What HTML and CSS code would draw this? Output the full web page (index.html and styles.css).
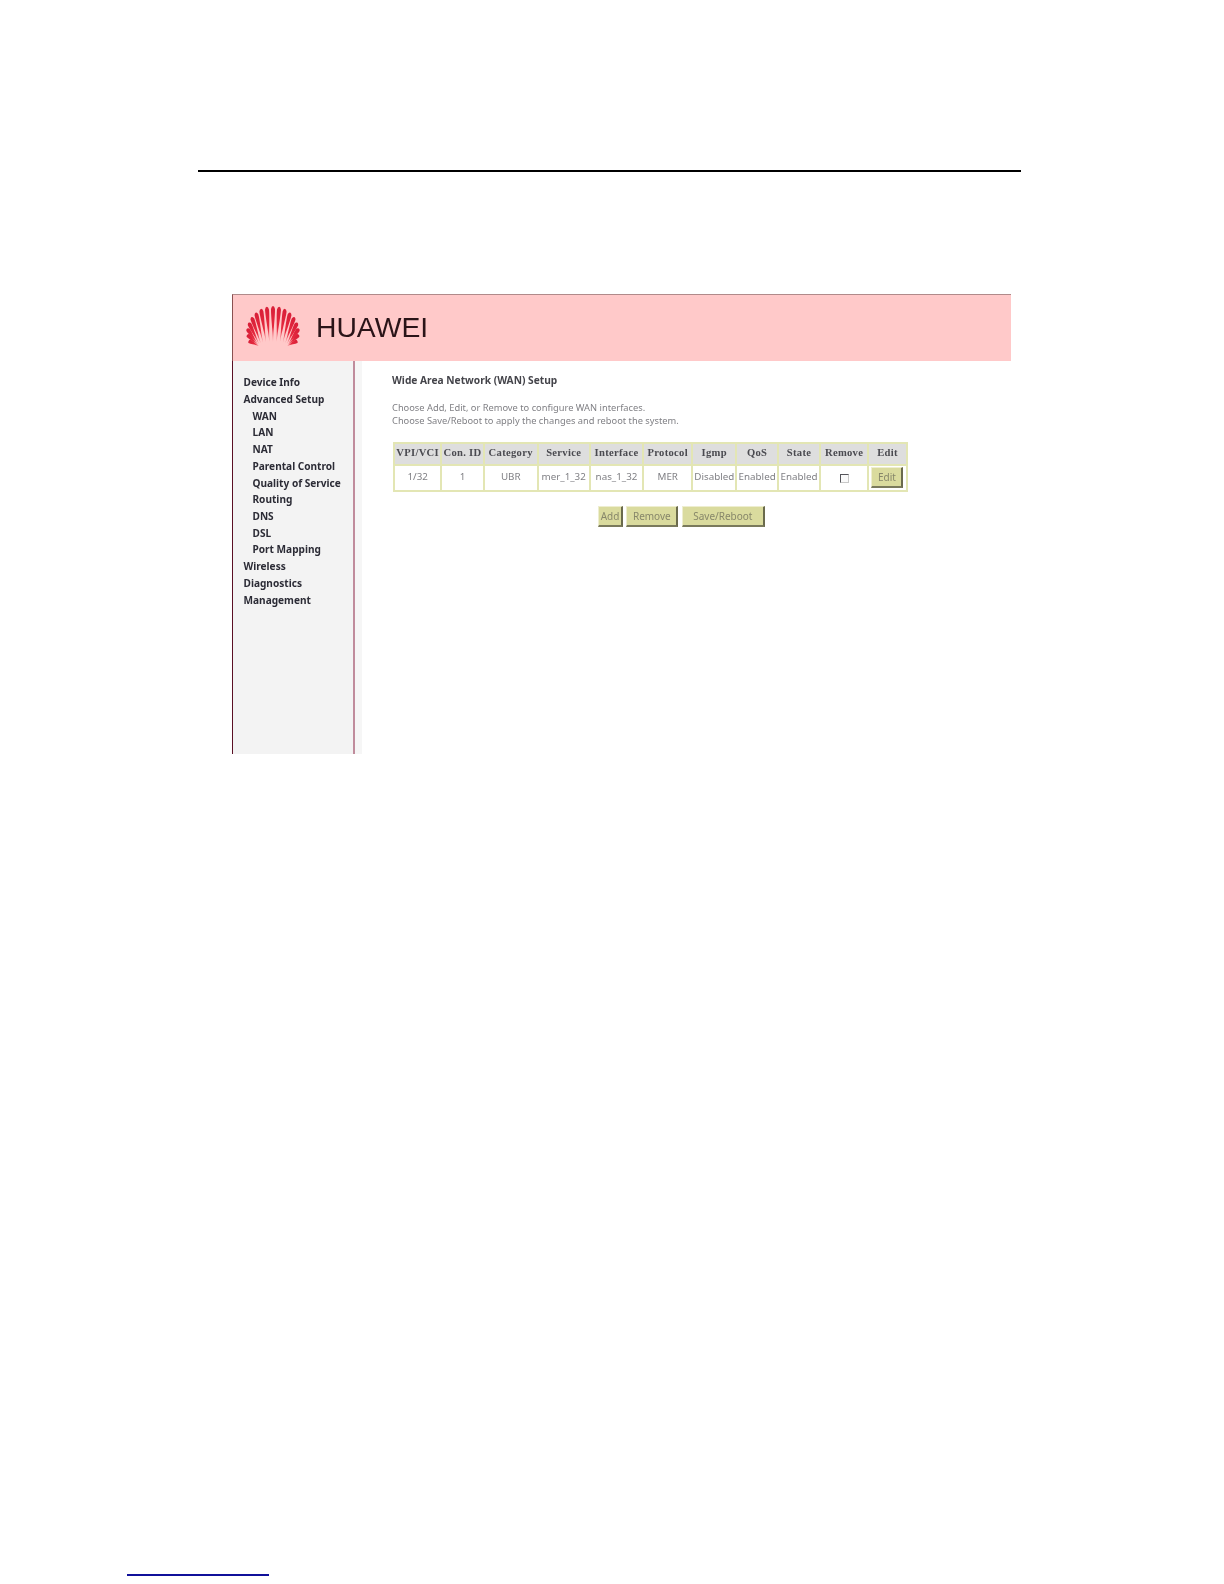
FILE: index.html
```html
<!DOCTYPE html>
<html lang="en">
<head>
<meta charset="utf-8">
<title>WAN Setup</title>
<link rel="stylesheet" href="styles.css">
</head>
<body>
<div class="page">
  <hr class="top-rule">
  <div class="shot">
    <header class="banner">
      <svg class="logo" viewBox="-27 -44 54 44" aria-hidden="true">
        <defs>
          <linearGradient id="g" x1="0" y1="-1" x2="0" y2="0" gradientUnits="userSpaceOnUse">
            <stop offset="0" stop-color="#d81f38"/>
            <stop offset=".6" stop-color="#e62a3e"/>
            <stop offset="1" stop-color="#f58a92"/>
          </linearGradient>
          <path id="p" d="M0 0C-.4 -.35 -2.1 -.7 -2 -.92Q-1.4 -1 0 -1Q1.4 -1 2 -.92C2.1 -.7 .4 -.35 0 0Z"/>
        </defs>
        <g class="petals">
          <use href="#p" transform="translate(-14.1 -3) rotate(-63.7) scale(1 11.5)"/>
          <use href="#p" transform="translate(-14.9 -3.7) rotate(-46) scale(1 15.1)"/>
          <use href="#p" transform="translate(-14.9 -4.4) rotate(-34.3) scale(1 19.4)"/>
          <use href="#p" transform="translate(-14 -5.1) rotate(-25.6) scale(1 23.6)"/>
          <use href="#p" transform="translate(-12.3 -5.7) rotate(-19) scale(1 27.7)"/>
          <use href="#p" transform="translate(-9.9 -6.3) rotate(-13.4) scale(1 31.1)"/>
          <use href="#p" transform="translate(-6.9 -6.7) rotate(-8.7) scale(1 33.8)"/>
          <use href="#p" transform="translate(-3.6 -6.9) rotate(-4.2) scale(1 35.4)"/>
          <use href="#p" transform="translate(0 -7) scale(1 36)"/>
          <use href="#p" transform="translate(3.6 -6.9) rotate(4.2) scale(1 35.4)"/>
          <use href="#p" transform="translate(6.9 -6.7) rotate(8.7) scale(1 33.8)"/>
          <use href="#p" transform="translate(9.9 -6.3) rotate(13.4) scale(1 31.1)"/>
          <use href="#p" transform="translate(12.3 -5.7) rotate(19) scale(1 27.7)"/>
          <use href="#p" transform="translate(14 -5.1) rotate(25.6) scale(1 23.6)"/>
          <use href="#p" transform="translate(14.9 -4.4) rotate(34.3) scale(1 19.4)"/>
          <use href="#p" transform="translate(14.9 -3.7) rotate(46) scale(1 15.1)"/>
          <use href="#p" transform="translate(14.1 -3) rotate(63.7) scale(1 11.5)"/>
        </g>
      </svg>
      <span class="brand">HUAWEI</span>
    </header>
    <div class="body">
      <nav class="side">
        <a>Device Info</a>
        <a>Advanced Setup</a>
        <a class="sub">WAN</a>
        <a class="sub">LAN</a>
        <a class="sub">NAT</a>
        <a class="sub">Parental Control</a>
        <a class="sub">Quality of Service</a>
        <a class="sub">Routing</a>
        <a class="sub">DNS</a>
        <a class="sub">DSL</a>
        <a class="sub">Port Mapping</a>
        <a>Wireless</a>
        <a>Diagnostics</a>
        <a>Management</a>
      </nav>
      <main class="content">
        <h1 class="title">Wide Area Network (WAN) Setup</h1>
        <p class="intro">Choose Add, Edit, or Remove to configure WAN interfaces.<br>Choose Save/Reboot to apply the changes and reboot the system.</p>
        <table class="wan">
          <thead>
            <tr><th>VPI/VCI</th><th>Con. ID</th><th>Category</th><th>Service</th><th>Interface</th><th>Protocol</th><th>Igmp</th><th>QoS</th><th>State</th><th>Remove</th><th>Edit</th></tr>
          </thead>
          <tbody>
            <tr><td>1/32</td><td>1</td><td>UBR</td><td>mer_1_32</td><td>nas_1_32</td><td>MER</td><td>Disabled</td><td>Enabled</td><td>Enabled</td><td class="ctl"><span class="check"></span></td><td class="ctl"><button class="btn edit">Edit</button></td></tr>
          </tbody>
        </table>
        <div class="actions">
          <button class="btn add">Add</button>
          <button class="btn remove">Remove</button>
          <button class="btn save">Save/Reboot</button>
        </div>
      </main>
    </div>
  </div>
  <hr class="foot-rule">
</div>
</body>
</html>
```
FILE: styles.css
```css
* { box-sizing: border-box; }
html, body { margin: 0; padding: 0; background: #fff; }
.page { width: 1224px; height: 1584px; padding-top: 170px; overflow: hidden; }
hr { border: 0; margin: 0; }
.top-rule { width: 823px; height: 2px; margin-left: 198px; background: #000; }
.foot-rule { width: 142px; height: 2px; margin: 820px 0 0 127px; background: #10109a; }

.shot {
  width: 779px; height: 460px; margin: 122px 0 0 232px;
  display: flex; flex-direction: column;
  font-family: "Noto Sans", sans-serif;
  filter: blur(.6px);
}
.banner {
  height: 67px; flex: none; display: flex; align-items: center;
  padding-left: 13px; background: #ffc9c9;
  border-top: 1px solid #b08a8a; border-left: 1px solid #8a5050;
}
.logo { width: 54px; height: 44px; flex: none; margin-top: -2px; }
.petals { fill: url(#g); }
.brand {
  margin: -2px 0 0 16px;
  font: 28.3px/1 "Liberation Sans", sans-serif; color: #2a1418;
}
.body { flex: 1; display: flex; min-height: 0; }
.side {
  width: 130px; flex: none; padding: 13.3px 0 0 10.5px;
  background: #f3f3f3;
  border-left: 1px solid #5a1024;
  box-shadow: inset -7px 0 0 #f6f6f6, inset -9px 0 0 #c08c9c;
  display: flex; flex-direction: column;
}
.side a {
  height: 16.72px; font-size: 10.1px; line-height: 16.72px; font-weight: 700;
  color: #2c2c36; white-space: nowrap;
}
.side .sub { padding-left: 9px; }

.content { flex: 1; padding: 12px 0 0 30px; background: #fff; color: #808085; }
.title { margin: 0; font-size: 10.2px; line-height: 14px; font-weight: 700; color: #44444a; }
.intro { margin: 13.9px 0 0; font-size: 9.3px; line-height: 13.6px; white-space: nowrap; }

.wan {
  margin: 13.6px 0 0 1px; width: 515px; height: 50px;
  table-layout: fixed; border-collapse: separate; border-spacing: 2px;
  background: #e3e6b4; font-size: 9.8px;
}
.wan th {
  height: 20px; padding: 0; background: #dedede; color: #4a4a50;
  font: 700 10.6px/1 "Liberation Serif", "DejaVu Serif", serif; letter-spacing: .3px;
  white-space: nowrap;
}
.wan td { padding: 0 0 3px; background: #fff; text-align: center; white-space: nowrap; }
.wan .ctl { padding: 0; }
.wan th:nth-child(1) { width: 45.3px; }
.wan th:nth-child(2) { width: 40.3px; }
.wan th:nth-child(3) { width: 52.2px; }
.wan th:nth-child(4) { width: 49.8px; }
.wan th:nth-child(5) { width: 51.8px; }
.wan th:nth-child(6) { width: 46.7px; }
.wan th:nth-child(7) { width: 42.4px; }
.wan th:nth-child(8) { width: 39.4px; }
.wan th:nth-child(9) { width: 40.4px; }
.wan th:nth-child(10) { width: 45.7px; }

.check {
  display: inline-block; width: 9px; height: 9px; vertical-align: middle;
  background: #fafafa; border: 1px solid; border-color: #55555a #c8c8c8 #c8c8c8 #55555a;
}
.btn {
  display: inline-block; height: 21px; padding: 0; margin: 0;
  background: #dadb9e; color: #87876a;
  border: 0; border-right: 2px solid #6a6a4c; border-bottom: 2px solid #7a7a5c;
  border-top: 1px solid #eeeed0; border-left: 1px solid #eeeed0;
  font: 400 10px/1 "Noto Sans", sans-serif;
}
.edit { width: 32px; height: 20.5px; vertical-align: middle; }
.actions { display: flex; gap: 3.3px; margin: 14.5px 0 0 206px; }
.add { width: 25px; }
.remove { width: 52px; }
.save { width: 83.5px; }
```
